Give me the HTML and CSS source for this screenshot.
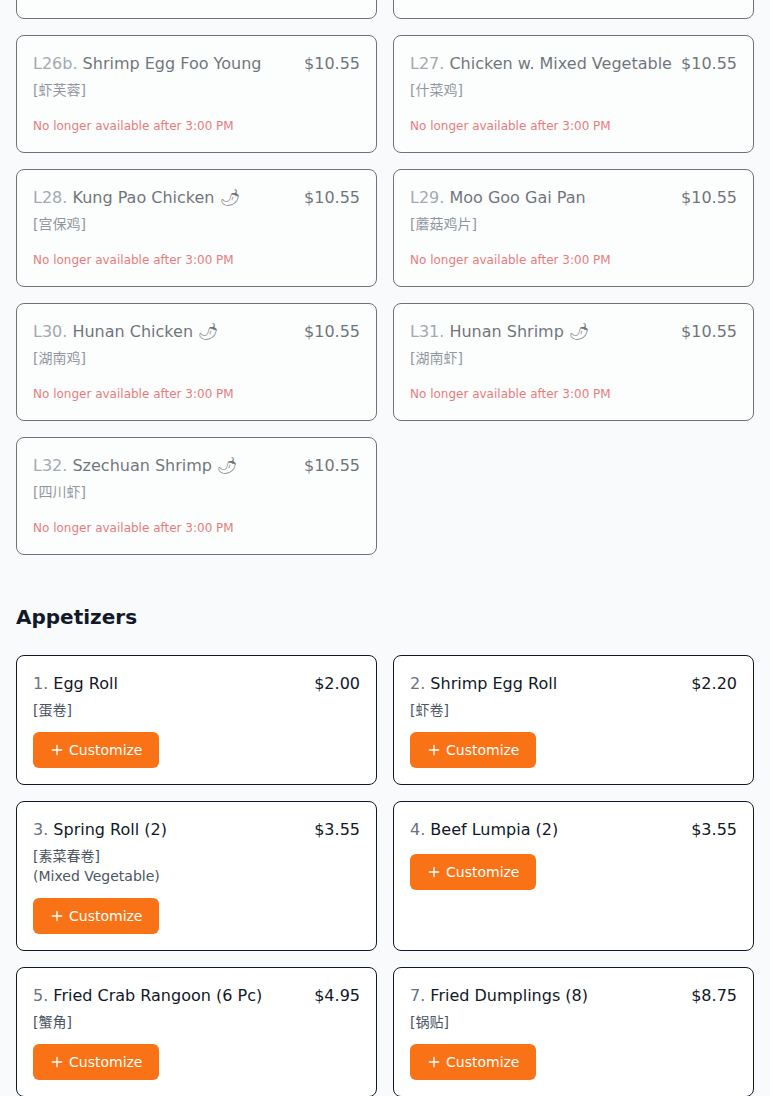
FILE: index.html
```html
<!DOCTYPE html>
<html>
<head>
  <title>Menu</title>
  <link rel="stylesheet" href="styles.css">
</head>
<body>
  <main class="menu">

    <!-- Lunch specials (tail of the list) -->
    <section class="section section-top">
      <div class="grid">
        <div class="card unavailable">
          <div class="title-row">
            <span class="name"><span class="num">L26.</span> Chicken Egg Foo Young</span>
            <span class="price">$10.55</span>
          </div>
          <div class="cn">[鸡芙蓉]</div>
          <div class="notice">No longer available after 3:00 PM</div>
        </div>
        <div class="card unavailable">
          <div class="title-row">
            <span class="name"><span class="num">L26a.</span> Pork Egg Foo Young</span>
            <span class="price">$10.55</span>
          </div>
          <div class="cn">[肉芙蓉]</div>
          <div class="notice">No longer available after 3:00 PM</div>
        </div>

        <div class="card unavailable">
          <div class="title-row">
            <span class="name"><span class="num">L26b.</span> Shrimp Egg Foo Young</span>
            <span class="price">$10.55</span>
          </div>
          <div class="cn">[虾芙蓉]</div>
          <div class="notice">No longer available after 3:00 PM</div>
        </div>
        <div class="card unavailable">
          <div class="title-row">
            <span class="name"><span class="num">L27.</span> Chicken w. Mixed Vegetable</span>
            <span class="price">$10.55</span>
          </div>
          <div class="cn">[什菜鸡]</div>
          <div class="notice">No longer available after 3:00 PM</div>
        </div>

        <div class="card unavailable">
          <div class="title-row">
            <span class="name"><span class="num">L28.</span> Kung Pao Chicken 🌶</span>
            <span class="price">$10.55</span>
          </div>
          <div class="cn">[宫保鸡]</div>
          <div class="notice">No longer available after 3:00 PM</div>
        </div>
        <div class="card unavailable">
          <div class="title-row">
            <span class="name"><span class="num">L29.</span> Moo Goo Gai Pan</span>
            <span class="price">$10.55</span>
          </div>
          <div class="cn">[蘑菇鸡片]</div>
          <div class="notice">No longer available after 3:00 PM</div>
        </div>

        <div class="card unavailable">
          <div class="title-row">
            <span class="name"><span class="num">L30.</span> Hunan Chicken 🌶</span>
            <span class="price">$10.55</span>
          </div>
          <div class="cn">[湖南鸡]</div>
          <div class="notice">No longer available after 3:00 PM</div>
        </div>
        <div class="card unavailable">
          <div class="title-row">
            <span class="name"><span class="num">L31.</span> Hunan Shrimp 🌶</span>
            <span class="price">$10.55</span>
          </div>
          <div class="cn">[湖南虾]</div>
          <div class="notice">No longer available after 3:00 PM</div>
        </div>

        <div class="card unavailable">
          <div class="title-row">
            <span class="name"><span class="num">L32.</span> Szechuan Shrimp 🌶</span>
            <span class="price">$10.55</span>
          </div>
          <div class="cn">[四川虾]</div>
          <div class="notice">No longer available after 3:00 PM</div>
        </div>
      </div>
    </section>

    <!-- Appetizers -->
    <section class="section">
      <h2 class="section-title">Appetizers</h2>
      <div class="grid">
        <div class="card">
          <div class="title-row">
            <span class="name"><span class="num">1.</span> Egg Roll</span>
            <span class="price">$2.00</span>
          </div>
          <div class="cn">[蛋卷]</div>
          <button class="btn"><svg viewBox="0 0 24 24"><path d="M5 12h14M12 5v14"/></svg>Customize</button>
        </div>
        <div class="card">
          <div class="title-row">
            <span class="name"><span class="num">2.</span> Shrimp Egg Roll</span>
            <span class="price">$2.20</span>
          </div>
          <div class="cn">[虾卷]</div>
          <button class="btn"><svg viewBox="0 0 24 24"><path d="M5 12h14M12 5v14"/></svg>Customize</button>
        </div>

        <div class="card">
          <div class="title-row">
            <span class="name"><span class="num">3.</span> Spring Roll (2)</span>
            <span class="price">$3.55</span>
          </div>
          <div class="cn">[素菜春卷]</div>
          <div class="desc">(Mixed Vegetable)</div>
          <button class="btn"><svg viewBox="0 0 24 24"><path d="M5 12h14M12 5v14"/></svg>Customize</button>
        </div>
        <div class="card">
          <div class="title-row">
            <span class="name"><span class="num">4.</span> Beef Lumpia (2)</span>
            <span class="price">$3.55</span>
          </div>
          <button class="btn"><svg viewBox="0 0 24 24"><path d="M5 12h14M12 5v14"/></svg>Customize</button>
        </div>

        <div class="card">
          <div class="title-row">
            <span class="name"><span class="num">5.</span> Fried Crab Rangoon (6 Pc)</span>
            <span class="price">$4.95</span>
          </div>
          <div class="cn">[蟹角]</div>
          <button class="btn"><svg viewBox="0 0 24 24"><path d="M5 12h14M12 5v14"/></svg>Customize</button>
        </div>
        <div class="card">
          <div class="title-row">
            <span class="name"><span class="num">7.</span> Fried Dumplings (8)</span>
            <span class="price">$8.75</span>
          </div>
          <div class="cn">[锅贴]</div>
          <button class="btn"><svg viewBox="0 0 24 24"><path d="M5 12h14M12 5v14"/></svg>Customize</button>
        </div>
      </div>
    </section>

  </main>
</body>
</html>
```

FILE: styles.css
```css
body {
  margin: 0;
  background-color: #f9fafb;
  color: #111827;
  font-family: "DejaVu Sans", "Noto Sans CJK SC", sans-serif;
}
.menu {
  padding: 0 16px;
}
/* page is scrolled: the first row is mostly above the fold */
.section-top {
  margin-top: -99px;
}
.section {
  margin-bottom: 48px;
}
.section-title {
  margin: 0 0 24px;
  font-size: 20px;
  line-height: 28px;
  font-weight: bold;
}
.grid {
  display: grid;
  grid-template-columns: 1fr 1fr;
  gap: 16px;
}
.card {
  display: flex;
  flex-direction: column;
  align-items: flex-start;
  padding: 16px;
  background-color: #fff;
  border: 1px solid #111827;
  border-radius: 8px;
}
.card.unavailable {
  opacity: 0.6;
  padding-bottom: 18px;
}
.title-row {
  display: flex;
  justify-content: space-between;
  gap: 8px;
  width: 100%;
  font-size: 16px;
  line-height: 24px;
}
.num {
  color: #6b7280;
}
.cn {
  margin-top: 4px;
  font-size: 14px;
  line-height: 20px;
  color: #4b5563;
}
.desc {
  font-size: 14px;
  line-height: 20px;
  color: #4b5563;
}
.notice {
  margin-top: 18px;
  font-size: 12px;
  line-height: 16px;
  color: #dc2626;
}
.btn {
  display: flex;
  align-items: center;
  gap: 4px;
  height: 36px;
  margin-top: 12px;
  padding: 0 16px;
  border: none;
  border-radius: 6px;
  background-color: #f97316;
  color: #fff;
  font-family: inherit;
  font-size: 14px;
}
.btn svg {
  width: 16px;
  height: 16px;
  fill: none;
  stroke: currentColor;
  stroke-width: 2;
  stroke-linecap: round;
}
```
